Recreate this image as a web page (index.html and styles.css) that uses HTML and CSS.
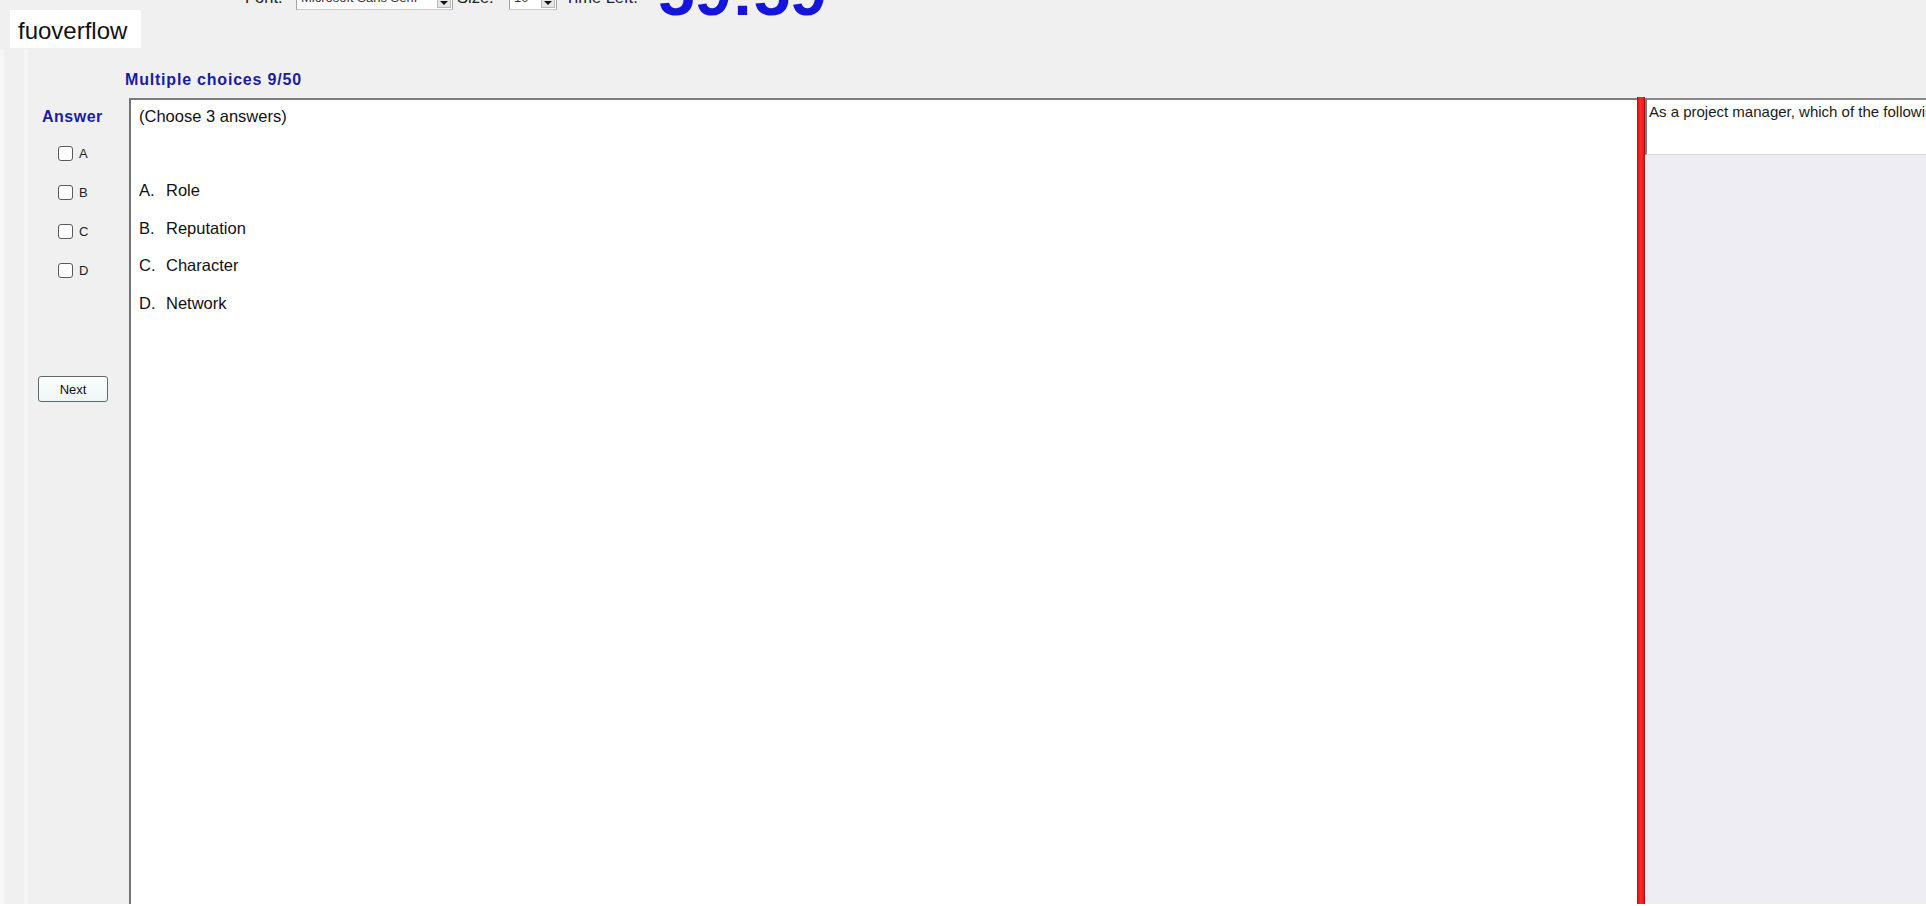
FILE: index.html
```html
<!DOCTYPE html>
<html lang="en">
<head>
    <meta charset="UTF-8">
    <meta name="viewport" content="width=device-width, initial-scale=1.0">
    <title>Exam Simulator</title>
    <link rel="stylesheet" href="styles.css">
</head>
<body>

<div class="brand">fuoverflow</div>

<div class="toolbar">
    <span class="tool-label label-font">Font:</span>
    <span class="combo combo-font">
        <span class="combo-text">Microsoft Sans Serif</span>
        <span class="combo-btn"></span>
    </span>
    <span class="tool-label label-size">Size:</span>
    <span class="combo combo-size">
        <span class="combo-text">10</span>
        <span class="combo-btn"></span>
    </span>
    <span class="tool-label label-time">Time Left:</span>
    <span class="timer">59:59</span>
</div>

<div class="workspace">
    <div class="workspace-inner">
        <div class="section-title">Multiple choices 9/50</div>

        <div class="exam">
            <div class="answer-panel">
                <div class="answer-title">Answer</div>
                <label class="choice"><input type="checkbox" class="choice-box"> A</label>
                <label class="choice"><input type="checkbox" class="choice-box"> B</label>
                <label class="choice"><input type="checkbox" class="choice-box"> C</label>
                <label class="choice"><input type="checkbox" class="choice-box"> D</label>
                <button class="next-btn">Next</button>
            </div>

            <div class="question-box">
                <div class="question-note">(Choose 3 answers)</div>
                <div class="options">
                    <div class="option"><span class="opt-key">A.</span>Role</div>
                    <div class="option"><span class="opt-key">B.</span>Reputation</div>
                    <div class="option"><span class="opt-key">C.</span>Character</div>
                    <div class="option"><span class="opt-key">D.</span>Network</div>
                </div>
            </div>

            <div class="splitter"></div>

            <div class="side-panel">
                <div class="prompt">As a project manager, which of the following are sources of your influence?</div>
            </div>
        </div>
    </div>
</div>

</body>
</html>
```

FILE: styles.css
```css
html {
    background-color: #ffffff;
}
body {
    margin: 0;
    height: 904px;
    overflow: hidden;
    position: relative;
    display: flex;
    flex-direction: column;
    background-color: #f0f0f0;
    font-family: "Liberation Sans", Arial, sans-serif;
    color: #111;
}

/* watermark badge */
.brand {
    position: absolute;
    left: 10px;
    top: 10px;
    width: 123px;
    height: 34px;
    padding: 4px 0 0 8px;
    line-height: 34px;
    background-color: #fff;
    font-size: 24px;
    color: #111;
}

/* top bar, mostly scrolled out of view */
.toolbar {
    height: 60px;
    margin-top: -44px;
    padding-left: 245px;
    display: flex;
    align-items: flex-end;
    flex-shrink: 0;
}
.tool-label {
    font-size: 16.5px;
    line-height: 19px;
    margin-bottom: 9px;
    color: #222;
    white-space: nowrap;
}
.label-font {
    width: 51px;
}
.label-size {
    width: 52px;
    padding-left: 4px;
}
.label-time {
    width: 90px;
    padding-left: 8px;
}
.combo {
    height: 20px;
    margin-bottom: 6px;
    display: flex;
    background-color: #fff;
    border: 1px solid #a3a3a3;
    border-bottom-color: #c9c9c9;
    box-sizing: border-box;
}
.combo-font {
    width: 157px;
}
.combo-size {
    width: 48px;
}
.combo-text {
    align-self: flex-end;
    margin-bottom: 5px;
    padding-left: 4px;
    font-size: 13px;
    line-height: 13px;
    color: #333;
    white-space: nowrap;
}
.combo-btn {
    margin: 1px 1px 1px auto;
    width: 12px;
    position: relative;
    background-color: #e6e6e6;
    border: 1px solid #b9b9b9;
}
.combo-btn::after {
    content: "";
    position: absolute;
    left: 2px;
    bottom: 2px;
    border-left: 4px solid transparent;
    border-right: 4px solid transparent;
    border-top: 4px solid #111;
}
.timer {
    margin-left: 3px;
    margin-bottom: -6px;
    font-size: 66px;
    line-height: 60px;
    font-weight: bold;
    color: #1414dc;
}

/* main frame */
.workspace {
    flex: 1;
    margin-top: 34px;
    border-left: 4px solid #f7f7f7;
    display: flex;
    min-height: 0;
}
.workspace-inner {
    flex: 1;
    margin-left: 20px;
    border-left: 4px solid #f6f6f6;
    display: flex;
    flex-direction: column;
    min-width: 0;
}
.section-title {
    height: 28px;
    padding: 20px 0 0 97px;
    line-height: 20px;
    font-size: 16px;
    font-weight: bold;
    letter-spacing: 0.8px;
    color: #1b1ba6;
}
.exam {
    flex: 1;
    display: flex;
    min-height: 0;
}

/* left answer column */
.answer-panel {
    width: 101px;
    flex-shrink: 0;
}
.answer-title {
    padding: 9px 0 0 14px;
    line-height: 20px;
    font-size: 16px;
    font-weight: bold;
    letter-spacing: 0.5px;
    color: #1b1ba6;
}
.choice {
    height: 39px;
    padding-left: 30px;
    display: flex;
    align-items: center;
    font-size: 13px;
    color: #222;
}
.choice:first-of-type {
    margin-top: 7px;
}
.choice-box {
    -webkit-appearance: none;
    appearance: none;
    width: 15px;
    height: 15px;
    margin: 0 6px 0 0;
    border: 1px solid #5a5a5a;
    border-radius: 3px;
    background-color: #fff;
    box-sizing: border-box;
}
.next-btn {
    display: block;
    width: 70px;
    height: 26px;
    margin: 86px 0 0 10px;
    padding: 0;
    border: 1px solid #5e6a6a;
    border-radius: 3px;
    background: linear-gradient(#fbfefe, #eef6f5);
    font-family: "Liberation Sans", Arial, sans-serif;
    font-size: 13px;
    color: #111;
}

/* question area */
.question-box {
    flex: 1;
    min-width: 0;
    background-color: #fff;
    border-left: 2px solid #727272;
    border-top: 2px solid #7c7c7c;
    padding-left: 8px;
    font-size: 16.5px;
}
.question-note {
    margin-top: 6px;
    line-height: 20px;
}
.options {
    margin-top: 46px;
}
.option {
    line-height: 37.5px;
}
.opt-key {
    display: inline-block;
    width: 27px;
}

.splitter {
    width: 8px;
    flex-shrink: 0;
    margin-top: -1px;
    background: linear-gradient(to right, #8e0e0e 0, #e21717 1px, #ff2b2b 4px, #e31616 7px, #7a0c0c 8px);
}

/* right side panel */
.side-panel {
    width: 281px;
    flex-shrink: 0;
    background-color: #eeedf3;
}
.prompt {
    height: 42px;
    padding: 2px 0 10px 2px;
    background-color: #fff;
    border-left: 2px solid #7a7a7a;
    border-top: 2px solid #888;
    border-bottom: 1px solid #d6d6e2;
    font-size: 15px;
    line-height: 19px;
    color: #1a1a1a;
    white-space: nowrap;
    overflow: hidden;
}
```
